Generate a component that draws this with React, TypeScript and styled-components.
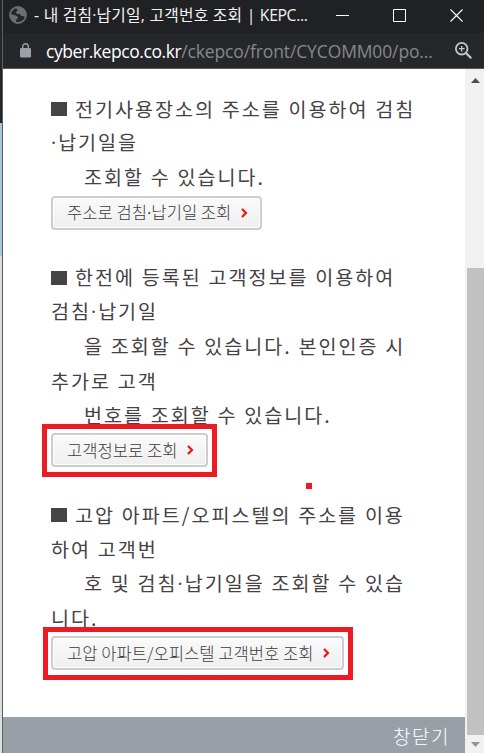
import React from "react";
import styled, { createGlobalStyle } from "styled-components";

const Global = createGlobalStyle`
  * { box-sizing: border-box; }
  body { margin: 0; overflow: hidden; background: #fff; font-family: "Noto Sans CJK KR", sans-serif; }
`;

const Screen = styled.div`
  position: relative;
  display: flex;
  width: 484px;
  height: 753px;
  overflow: hidden;
`;

const Backdrop = styled.div`
  flex: none;
  width: 3px;
  height: 753px;
  border-right: 1px solid #5c5f62;
  background: linear-gradient(#25262b 0 123px, #a9c5d8 123px 256px, #dadfdd 256px);
`;

const Popup = styled.div`
  flex: 1;
  display: flex;
  flex-direction: column;
  min-width: 0;
`;

const TitleBar = styled.header`
  display: flex;
  align-items: center;
  height: 33px;
  padding: 0 0 3px 6px;
  background: #202124;
  color: #f2f2f2;
`;

const Title = styled.div`
  width: 276px;
  margin-left: 7px;
  font: 15.8px/30px "Open Sans", "Noto Sans CJK KR", sans-serif;
  letter-spacing: 0.22px;
  white-space: nowrap;
`;

const Brand = styled.span`
  letter-spacing: -0.4px;
`;

const WindowControls = styled.div`
  display: flex;
  align-items: center;
  gap: 44px;
  margin-left: 26px;
`;

const AddressBar = styled.div`
  display: flex;
  align-items: center;
  height: 36px;
  padding: 0 12px 0 17px;
  background: #25272b;
  border-bottom: 1px solid #56585c;
`;

const Url = styled.div`
  flex: 1;
  margin-left: 15px;
  font: 17.5px/34px "Open Sans", sans-serif;
  letter-spacing: -0.13px;
  color: #85888c;
  white-space: nowrap;
`;

const Host = styled.span`
  color: #fff;
  letter-spacing: -0.43px;
`;

const Viewport = styled.div`
  display: flex;
  flex: 1;
  min-height: 0;
`;

const Page = styled.main`
  display: flex;
  flex: 1;
  flex-direction: column;
  background: #fff;
`;

const Content = styled.div`
  flex: 1;
  padding: 22.5px 0 0 48px;
`;

const Section = styled.section<{ $height: number }>`
  height: ${(p) => p.$height}px;
`;

const Line = styled.p<{ $indent?: boolean }>`
  display: flex;
  align-items: center;
  height: 34.4px;
  margin: 0;
  padding-left: ${(p) => (p.$indent ? 33 : 0)}px;
  font-size: 19.6px;
  line-height: 34.4px;
  letter-spacing: 1.97px;
  word-spacing: 0.4px;
  color: #464144;
  white-space: pre;
`;

const Dot = styled.span`
  font-family: "Open Sans", sans-serif;
  font-weight: 400;
`;

const Bullet = styled.span`
  width: 16px;
  height: 14px;
  margin-right: 8px;
  background: #464345;
`;

const LinkButton = styled.button<{ $width: number }>`
  display: flex;
  align-items: center;
  justify-content: space-between;
  width: ${(p) => p.$width}px;
  height: 34px;
  margin: 1px 0 0;
  padding: 0 12px 0 14px;
  border: 2px solid #cbcdce;
  border-radius: 4px;
  background: linear-gradient(#fafafa, #efefef);
  box-shadow: inset 0 0 0 1px #fff;
  font: 300 16.6px/30px "Noto Sans CJK KR", sans-serif;
  color: #3c3c3c;
  white-space: nowrap;
`;

const Footer = styled.footer`
  height: 36px;
  padding-right: 15px;
  background: #989fa7;
  color: #fff;
  font: 300 19px/38px "Noto Sans CJK KR", sans-serif;
  letter-spacing: 1.5px;
  text-align: right;
`;

const Scrollbar = styled.div`
  display: flex;
  flex-direction: column;
  justify-content: space-between;
  width: 19px;
  padding: 9px 0 6px 2px;
  background: #f1f1f1;
`;

const Arrow = styled.svg`
  display: block;
  margin: 0 auto;
`;

const Track = styled.div`
  flex: 1;
  display: flex;
  margin: 0 0 7px;
  align-items: flex-end;
`;

const Thumb = styled.div`
  width: 17px;
  height: 467px;
  background: #c1c1c1;
`;

const Highlight = styled.div<{ $x: number; $y: number; $w: number; $h: number }>`
  position: absolute;
  left: ${(p) => p.$x}px;
  top: ${(p) => p.$y}px;
  width: ${(p) => p.$w}px;
  height: ${(p) => p.$h}px;
  border: 5px solid #ed1c24;
`;

const Marker = styled.div`
  position: absolute;
  left: 306px;
  top: 483px;
  width: 6px;
  height: 6px;
  background: #ed1c24;
`;

const Chevron = () => (
  <svg width="7" height="10" viewBox="0 0 7 10" fill="none">
    <path d="M1 1L5 5L1 9" stroke="#f6a38a" strokeWidth="3" opacity=".4" />
    <path d="M1 1L5 5L1 9" stroke="#ea1515" strokeWidth="2" />
  </svg>
);

/* Sets the middle dot in a Latin font, where its advance is narrower. */
const Dotted = ({ text }: { text: string }) => {
  const parts = text.split("·");
  return (
    <span>
      {parts[0]}
      {parts.length > 1 && <Dot>·</Dot>}
      {parts[1]}
    </span>
  );
};

interface Item {
  height: number;
  lines: { text: string; indent?: boolean }[];
  button: string;
  width: number;
}

const items: Item[] = [
  {
    height: 168.9,
    lines: [
      { text: "전기사용장소의 주소를 이용하여 검침" },
      { text: "·납기일을" },
      { text: "조회할 수 있습니다.", indent: true },
    ],
    button: "주소로 검침·납기일 조회",
    width: 211,
  },
  {
    height: 237.4,
    lines: [
      { text: "한전에 등록된 고객정보를 이용하여" },
      { text: "검침·납기일" },
      { text: "을 조회할 수 있습니다. 본인인증 시", indent: true },
      { text: "추가로 고객" },
      { text: "번호를 조회할 수 있습니다.", indent: true },
    ],
    button: "고객정보로 조회",
    width: 157,
  },
  {
    height: 180,
    lines: [
      { text: "고압 아파트/오피스텔의 주소를 이용" },
      { text: "하여 고객번" },
      { text: "호 및 검침·납기일을 조회할 수 있습", indent: true },
      { text: "니다." },
    ],
    button: "고압 아파트/오피스텔 고객번호 조회",
    width: 293,
  },
];

export default function App() {
  return (
    <Screen>
      <Global />
      <Backdrop />
      <Popup>
        <TitleBar>
          <svg width="18" height="18" viewBox="0 0 18 18">
            <circle cx="9" cy="9" r="8" fill="#25262a" stroke="#6c6e71" strokeWidth="1.8" />
            <path d="M1 8l4 1 3 1 1 2-2 2 0 2-3-1-3-4zM9 1L7 3l2 1-2 2 1 2 3 0 1 2 2 0 2 1 1-4-3-5z" fill="#6c6e71" />
          </svg>
          <Title>- 내 검침·납기일, 고객번호 조회 | <Brand>KEPC...</Brand></Title>
          <WindowControls>
            <svg width="13" height="13" viewBox="0 0 13 13"><path d="M0 6.5h13" stroke="#fff" /></svg>
            <svg width="13" height="13" viewBox="0 0 13 13"><path d="M.5.5h12v12H.5z" fill="none" stroke="#fff" /></svg>
            <svg width="13" height="13" viewBox="0 0 13 13"><path d="M.5.5l12 12m0-12l-12 12" stroke="#fff" strokeWidth="1.1" /></svg>
          </WindowControls>
        </TitleBar>
        <AddressBar>
          <svg width="11" height="15" viewBox="0 0 11 15">
            <rect y="5" width="11" height="9.5" rx="1.3" fill="#9aa0a6" />
            <path d="M2.7 6V3.5a2.8 2.8 0 015.6 0V6" fill="none" stroke="#9aa0a6" strokeWidth="1.4" />
          </svg>
          <Url><Host>cyber.kepco.co.kr</Host>/ckepco/front/CYCOMM00/po...</Url>
          <svg width="17" height="17" viewBox="0 0 17 17" fill="none" stroke="#c6c8ca">
            <circle cx="6.7" cy="6.7" r="5.8" strokeWidth="1.8" />
            <path d="M11 11l5.3 5.3" strokeWidth="2.2" />
            <path d="M3.9 6.7h5.6M6.7 3.9v5.6" strokeWidth="1.3" />
          </svg>
        </AddressBar>
        <Viewport>
          <Page>
            <Content>
              {items.map((item) => (
                <Section key={item.button} $height={item.height}>
                  {item.lines.map((line, i) => (
                    <Line key={i} $indent={line.indent}>
                      {i === 0 && <Bullet />}
                      <Dotted text={line.text} />
                    </Line>
                  ))}
                  <LinkButton $width={item.width}>
                    <Dotted text={item.button} />
                    <Chevron />
                  </LinkButton>
                </Section>
              ))}
            </Content>
            <Footer>창닫기</Footer>
          </Page>
          <Scrollbar>
            <Arrow width="9" height="5" viewBox="0 0 9 5"><path d="M0 5L4.5 0L9 5z" fill="#505050" /></Arrow>
            <Track><Thumb /></Track>
            <Arrow width="9" height="5" viewBox="0 0 9 5"><path d="M0 0L4.5 5L9 0z" fill="#8d949c" /></Arrow>
          </Scrollbar>
        </Viewport>
      </Popup>
      <Highlight $x={42} $y={424} $w={175} $h={53} />
      <Highlight $x={43} $y={627} $w={310} $h={53} />
      <Marker />
    </Screen>
  );
}
